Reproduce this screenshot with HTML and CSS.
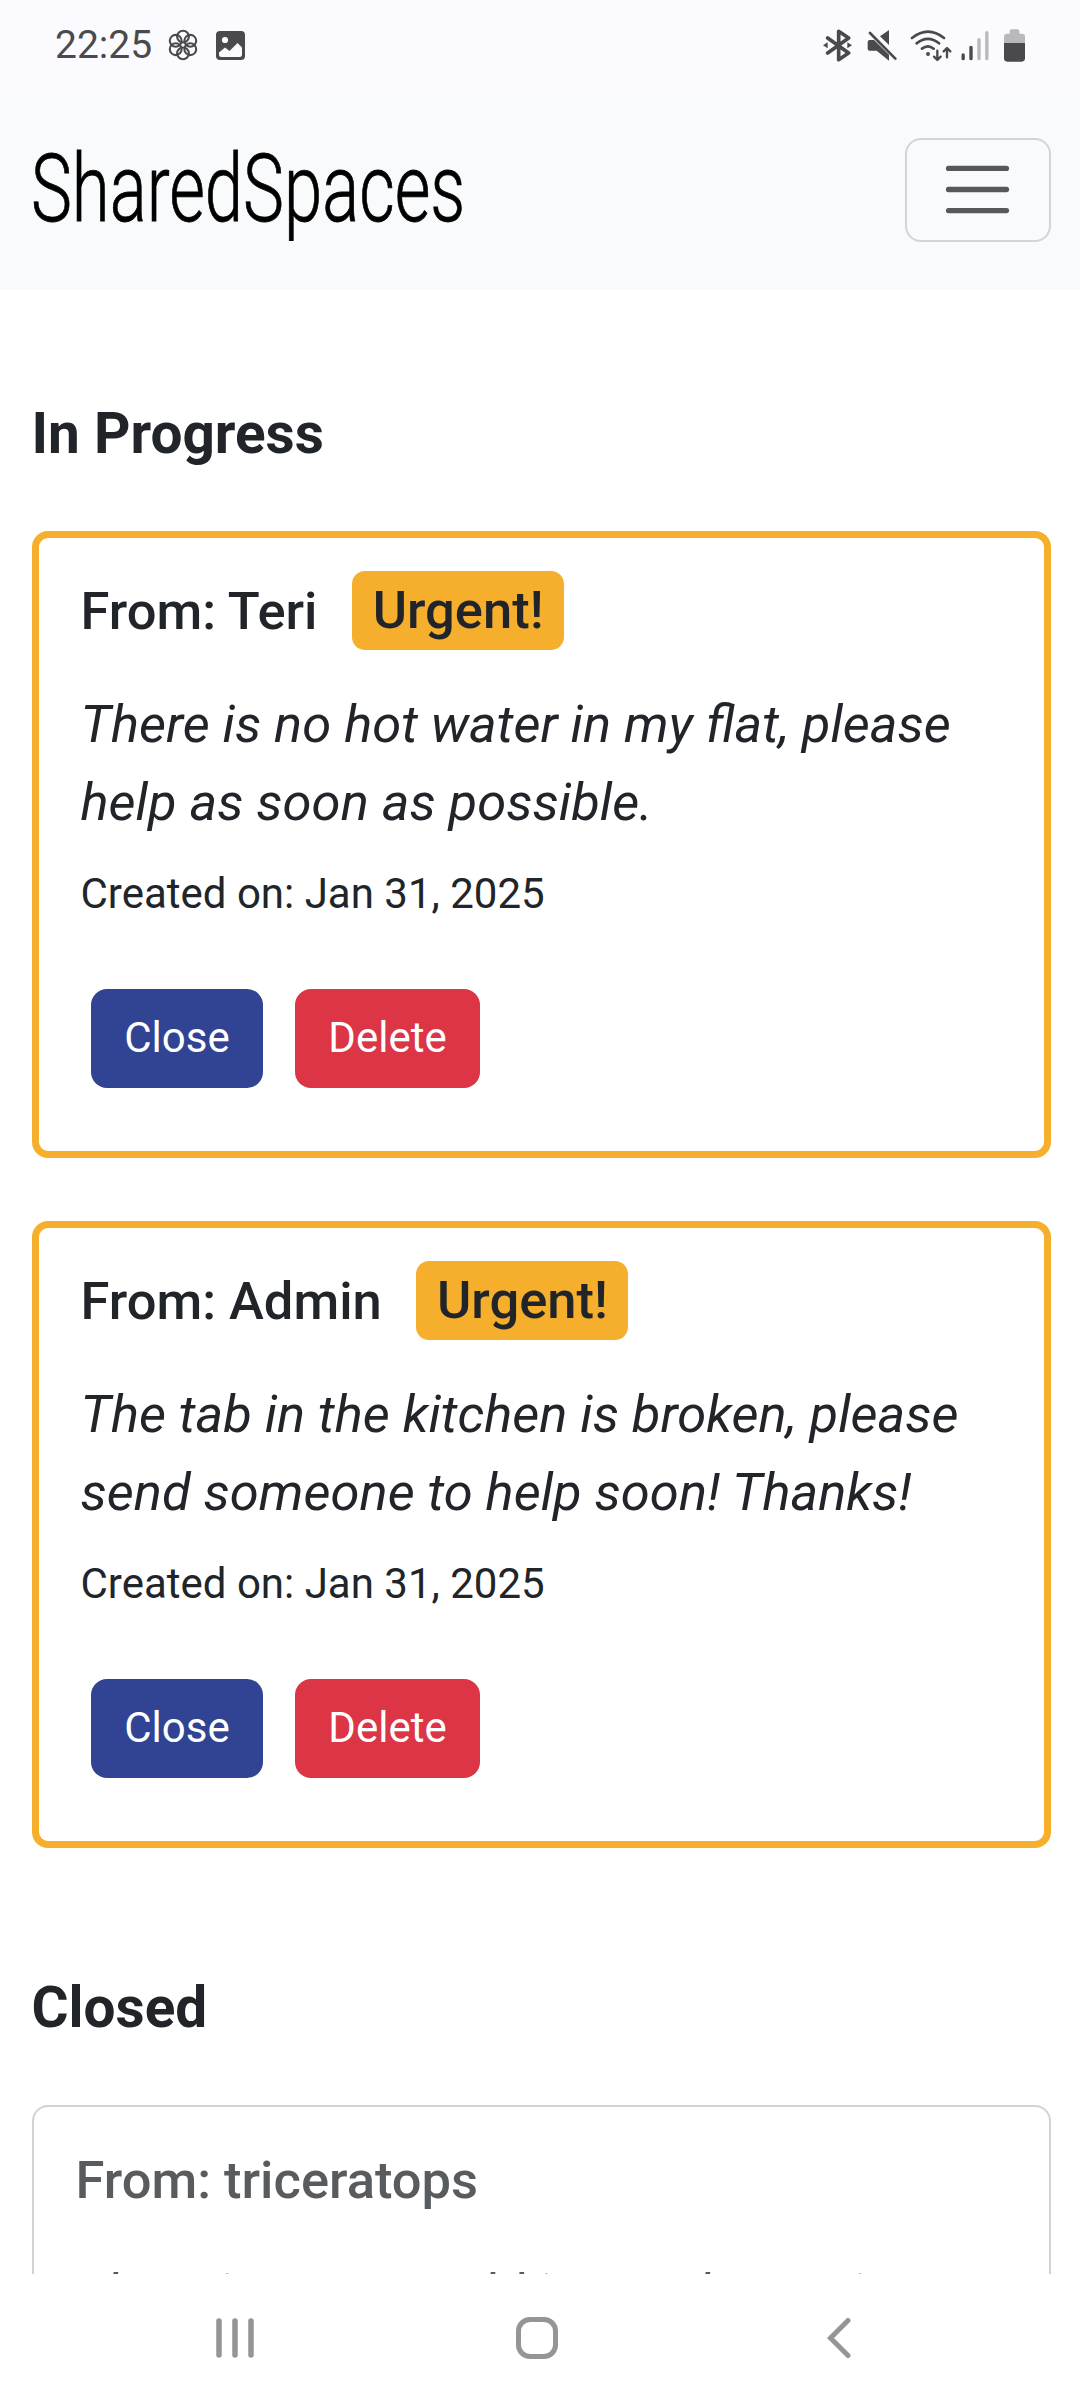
FILE: index.html
```html
<!DOCTYPE html>
<html lang="en">
<head>
<meta charset="utf-8">
<title>SharedSpaces</title>
<link rel="stylesheet" href="styles.css">
</head>
<body>
<div class="screen">
  <div class="status">
    <span class="clock">22:25</span>
    <svg class="flower" width="30" height="32" viewBox="-15 -16 30 32" fill="none" stroke="#4a4a4c" stroke-width="2.1">
      <circle cx="0" cy="-8.4" r="5.9"/><circle cx="7.3" cy="-4.2" r="5.9"/><circle cx="7.3" cy="4.2" r="5.9"/>
      <circle cx="0" cy="8.4" r="5.9"/><circle cx="-7.3" cy="4.2" r="5.9"/><circle cx="-7.3" cy="-4.2" r="5.9"/>
    </svg>
    <svg class="photo" width="29" height="29" viewBox="0 0 29 29">
      <rect width="29" height="29" rx="4" fill="#4a4a4c"/>
      <circle cx="9" cy="9" r="3.1" fill="#fafaff"/>
      <path d="M3 21.5 9 16.5 13.5 20 21.5 12 26 16.5V23.5Q26 26 23.5 26H5.500Q3 26 3 23.500Z" fill="#fafaff"/>
    </svg>
    <div class="indicators">
      <svg class="bluetooth" width="29" height="33" viewBox="69 54 87 99" fill="none" stroke="#4a4a4c" stroke-width="11" stroke-linecap="round" stroke-linejoin="round">
        <path d="M83 81 146 126 116 146V61L146 81 83 126"/>
        <path d="M69 103 83 94V112ZM156 103 142 94V112Z" fill="#4a4a4c" stroke="none"/>
      </svg>
      <svg class="mute" width="30" height="33" viewBox="200 54 90 99">
        <path d="M239 76 266 57V102ZM202 93Q202 87 208 87H221L266 131V149L229 119H208Q202 119 202 113Z" fill="#4a4a4c"/>
        <path d="M209 66 285 143" stroke="#4a4a4c" stroke-width="8" stroke-linecap="round"/>
      </svg>
      <svg class="wifi" width="42" height="33" viewBox="330 54 126 99" fill="none" stroke="#4a4a4c" stroke-width="8" stroke-linecap="round" stroke-linejoin="round">
        <path d="M336 81Q384 43 432 81M350 97Q384 70 417 97M366 113Q384 99 401 113"/>
        <path d="M412 119V146M402 137 412 147 422 137M441 139V112M431 121 441 111 451 121" stroke-width="7"/>
        <circle cx="384" cy="129" r="6" fill="#4a4a4c" stroke="none"/>
      </svg>
      <svg class="signal" width="28" height="33" viewBox="483 54 84 99" stroke-width="10" stroke-linecap="round">
        <path d="M489.500 132V143M513 109V143" stroke="#4a4a4c"/>
        <path d="M537 86V143M560.500 65V143" stroke="#b9b9bd"/>
      </svg>
      <svg class="battery" width="21" height="33" viewBox="612 54 63 99">
        <path d="M612 97V77Q612 68 621 68H629V61Q629 55 635 55H652Q658 55 658 61V68H666Q675 68 675 77V97Z" fill="#b9b9bd"/>
        <path d="M612 96H675V142Q675 152 665 152H622Q612 152 612 142Z" fill="#4a4a4c"/>
      </svg>
    </div>
  </div>

  <header class="navbar">
    <a class="brand"><span class="brand-text">SharedSpaces</span></a>
    <button class="toggler" aria-label="Menu">
      <svg width="79" height="79" viewBox="0 0 30 30" stroke="#56595c" stroke-width="2" stroke-linecap="round"><path d="M4 7h22M4 15h22M4 23h22"/></svg>
    </button>
  </header>

  <main class="content">
    <h4 class="section-title">In Progress</h4>
    <section class="card urgent">
      <div class="card-head"><h5 class="from">From: Teri</h5><span class="badge">Urgent!</span></div>
      <p class="message">There is no hot water in my flat, please<br>help as soon as possible.</p>
      <p class="created">Created on: Jan 31, 2025</p>
      <div class="actions"><button class="btn close">Close</button><button class="btn delete">Delete</button></div>
    </section>
    <section class="card urgent">
      <div class="card-head"><h5 class="from">From: Admin</h5><span class="badge">Urgent!</span></div>
      <p class="message">The tab in the kitchen is broken, please<br>send someone to help soon! Thanks!</p>
      <p class="created">Created on: Jan 31, 2025</p>
      <div class="actions"><button class="btn close">Close</button><button class="btn delete">Delete</button></div>
    </section>
    <h4 class="section-title closed-title">Closed</h4>
    <section class="card closed">
      <h5 class="from">From: triceratops</h5>
      <p class="message">There is some mold in my shower in</p>
    </section>
  </main>

  <nav class="system-nav">
    <svg width="38" height="42" viewBox="0 0 38 42" stroke="#959595" stroke-width="5.500" stroke-linecap="round"><path d="M3 4V38M19 4V38M35 4V38"/></svg>
    <svg class="home" width="42" height="42" viewBox="0 0 42 42" fill="none" stroke="#959595" stroke-width="5"><rect x="2.500" y="2.500" width="37" height="37" rx="11.500"/></svg>
    <svg class="back" width="24" height="42" viewBox="0 0 24 42" fill="none" stroke="#959595" stroke-width="5" stroke-linecap="round"><path d="M21 3.500 3.500 21 21 38.500"/></svg>
  </nav>
</div>
</body>
</html>
```
FILE: styles.css
```css
* { box-sizing: border-box; }
body { margin: 0; background: #fff; color: #212529; font-family: Roboto, "Noto Sans", sans-serif; }
h4, h5, p { margin: 0; }
button { font-family: inherit; margin: 0; padding: 0; }
svg { display: block; flex: none; }

.screen { width: 1080px; height: 2400px; display: flex; flex-direction: column; overflow: hidden; }

.status { height: 90px; flex: none; display: flex; align-items: center; padding: 0 55px; background: #fafaff; }
.clock { width: 113px; font-size: 39px; line-height: 46px; color: #4a4a4c; }
.photo { margin-left: 18px; }
.indicators { display: flex; margin-left: auto; }
.mute { margin-left: 15px; }
.wifi { margin-left: 13px; }
.signal { margin-left: 9px; }
.battery { margin-left: 15px; }

.navbar { height: 200px; flex: none; display: flex; align-items: center; justify-content: space-between; padding: 0 29px 0 31px; background: #f8fafc; }
.brand { width: 430px; color: #000; }
.brand-text { display: block; width: max-content; padding-bottom: 2px; font-size: 94px; font-weight: 300; line-height: 112px; transform: scaleX(.733); transform-origin: left center; -webkit-text-stroke: .8px #000; }
.toggler { width: 146px; height: 104px; display: flex; align-items: center; justify-content: center; padding: 0 1px 1px 0; border: 2px solid #d2d4d6; border-radius: 16px; background: transparent; }

.content { flex: 1; min-height: 0; overflow: hidden; padding: 110px 29px 0 32px; }
.section-title { margin: 0 0 63px -.5px; font-size: 56.7px; font-weight: 700; line-height: 68px; }
.closed-title { margin-top: 126px; }

.card { border-radius: 16px; }
.card.urgent { height: 627px; border: 7px solid #f6af2d; padding: 33px 41.5px 0; }
.card.urgent + .card.urgent { margin-top: 63px; }
.card.closed { height: 627px; border: 2px solid #d2d2d2; padding: 42px 41.5px 0; color: #595c5f; }
.card-head { display: flex; align-items: center; gap: 34.7px; height: 79px; }
.from { font-size: 52.5px; font-weight: 500; line-height: 63px; }
.card-head .from { padding-top: 2px; }
.badge { height: 79px; padding: 0 20.5px; border-radius: 13px; background: #f6af2d; font-size: 52.5px; font-weight: 500; line-height: 79px; }
.message { margin-top: 35px; font-size: 52.5px; font-style: italic; line-height: 78px; white-space: nowrap; }
.closed .message { margin-top: 42px; }
.created { margin-top: 21px; font-size: 42px; line-height: 63px; }
.actions { display: flex; gap: 32px; margin: 64px 0 0 10.5px; }
.btn { height: 99px; padding-bottom: 3px; border: 0; border-radius: 16px; color: #fff; font-size: 42px; line-height: 63px; }
.close { width: 172px; background: #314494; }
.delete { width: 185px; background: #dc3545; }

.system-nav { height: 126px; flex: none; display: flex; align-items: center; padding: 2px 0 0 216px; background: #fff; }
.home { margin-left: 262px; }
.back { margin-left: 269px; }
```
